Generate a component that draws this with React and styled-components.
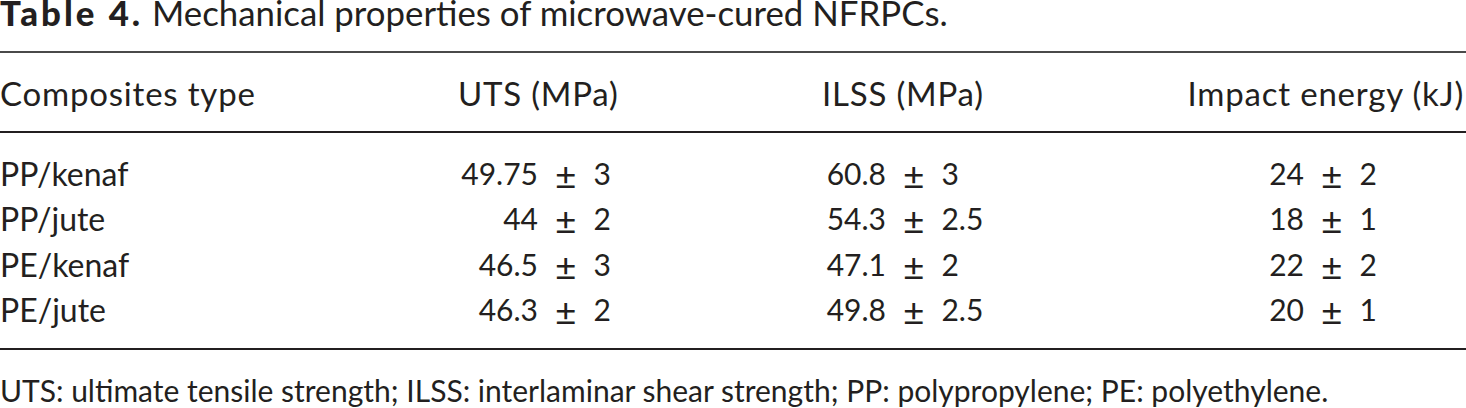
import React from 'react';
import styled, { createGlobalStyle } from 'styled-components';

const GlobalStyle = createGlobalStyle`
  html, body { margin: 0; padding: 0; background: #fff; }
  body { font-family: Lato, "Open Sans", sans-serif; color: #231f20; }
`;

const Page = styled.div`
  width: 1466px;
  height: 408px;
  overflow: hidden;
`;

const Caption = styled.div`
  font-size: 34.8px;
  line-height: 26px;
  margin-bottom: 25px;
  white-space: nowrap;

  b {
    font-weight: 900;
    letter-spacing: 3px;
  }
`;

const Table = styled.div`
  border-top: 2px solid #4a4a4a;
  border-bottom: 2px solid #231f20;
`;

const Row = styled.div`
  display: grid;
  grid-template-columns: 458px 364px 330px 1fr;
  font-size: 32px;
  line-height: 45.5px;
  white-space: nowrap;
`;

const HeadRow = styled(Row)`
  padding: 18px 2px 14px 0;
  border-bottom: 2px solid #231f20;
  font-size: 33px;
  letter-spacing: 0.8px;
`;

const Body = styled.div`
  padding: 18px 0 15px;
`;

const HeadCell = styled.div`
  justify-self: ${p => p.$align || 'start'};
`;

const Label = styled.div`
  font-size: 32px;
`;

const Value = styled.div`
  display: grid;
  grid-template-columns: ${p => p.$mean}px auto auto;
  column-gap: 17px;
  justify-content: start;
  font-size: 30px;
`;

const Mean = styled.span`
  text-align: right;
`;

const PlusMinus = styled.span`
  font-size: 37px;
  transform: translateY(1px);
`;

const Note = styled.div`
  margin-top: 22px;
  font-size: 30px;
  line-height: 36px;
  white-space: nowrap;
`;

const rows = [
  ['PP/kenaf', ['49.75', '3'], ['60.8', '3'], ['24', '2']],
  ['PP/jute', ['44', '2'], ['54.3', '2.5'], ['18', '1']],
  ['PE/kenaf', ['46.5', '3'], ['47.1', '2'], ['22', '2']],
  ['PE/jute', ['46.3', '2'], ['49.8', '2.5'], ['20', '1']],
];

// mean column widths so that ± lines up in each column
const meanWidths = [80, 64, 152];

function Cell({ value, mean }) {
  return (
    <Value $mean={mean}>
      <Mean>{value[0]}</Mean>
      <PlusMinus>±</PlusMinus>
      <span>{value[1]}</span>
    </Value>
  );
}

export default function App() {
  return (
    <Page>
      <GlobalStyle />
      <Caption>
        <b>Table 4.</b> Mechanical properties of microwave-cured NFRPCs.
      </Caption>
      <Table>
        <HeadRow>
          <HeadCell>Composites type</HeadCell>
          <HeadCell>UTS (MPa)</HeadCell>
          <HeadCell>ILSS (MPa)</HeadCell>
          <HeadCell $align="end">Impact energy (kJ)</HeadCell>
        </HeadRow>
        <Body>
          {rows.map(r => (
            <Row key={r[0]}>
              <Label>{r[0]}</Label>
              {r.slice(1).map((v, i) => (
                <Cell key={i} value={v} mean={meanWidths[i]} />
              ))}
            </Row>
          ))}
        </Body>
      </Table>
      <Note>
        UTS: ultimate tensile strength; ILSS: interlaminar shear strength; PP: polypropylene; PE: polyethylene.
      </Note>
    </Page>
  );
}
